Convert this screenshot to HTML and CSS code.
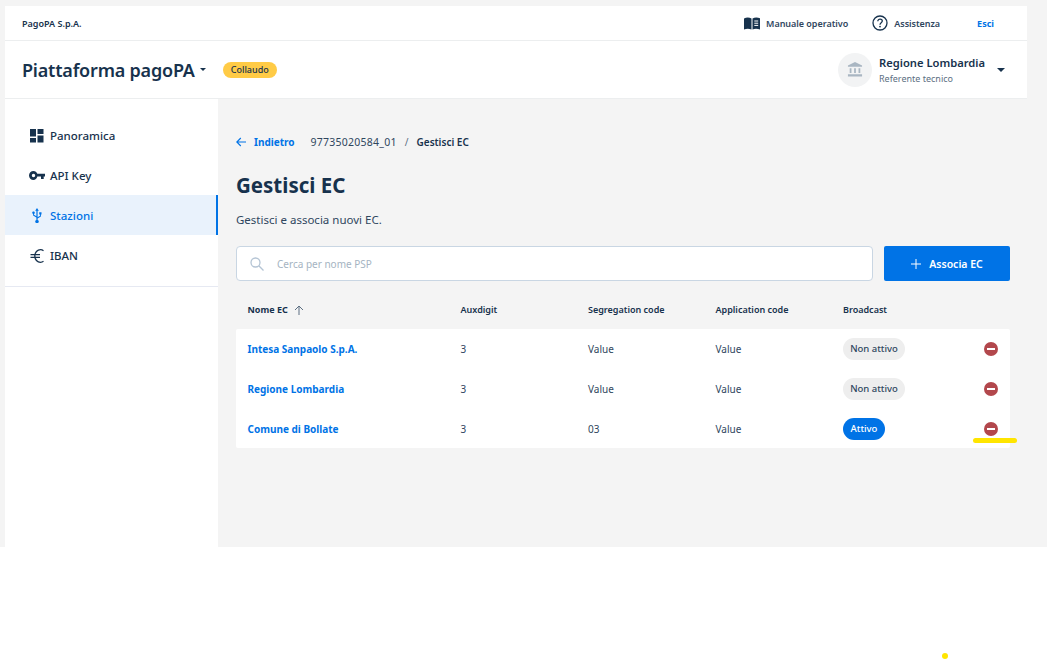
FILE: index.html
```html
<!DOCTYPE html>
<html>
	<head>
		<meta charset="UTF-8">
		<title>Gestisci EC</title>
		<link rel="stylesheet" href="styles.css">
	</head>
	<body>
		<section class="frame">
			<div class="topbar">
				<span class="company">PagoPA S.p.A.</span>
				<div class="toplinks">
					<span class="toplink">
						<svg width="16" height="13" viewBox="0 0 16 13"><path fill="#17324d" d="M0 1.5C2.500.2 5 .2 7.500 1.500V12.600C5 11.400 2.500 11.400 0 12.600Z"/><path fill="#17324d" d="M8.500 1.500C10.500.3 13.500.2 16 1.300V12.600C13.500 11.400 10.500 11.400 8.500 12.600Z"/><path stroke="#fff" d="M10.300 4H14.200M10.300 6.200H14.200M10.300 8.400H14.200"/></svg>
						Manuale operativo
					</span>
					<span class="toplink help">
						<svg width="16" height="16" viewBox="0 0 16 16"><circle cx="8" cy="8" r="7" fill="none" stroke="#17324d" stroke-width="1.300"/><path fill="none" stroke="#17324d" stroke-width="1.300" d="M5.800 6.200C5.800 3.400 10.300 3.500 10.300 6.100C10.300 7.800 8 7.800 8 9.700"/><circle cx="8" cy="11.600" r=".9" fill="#17324d"/></svg>
						Assistenza
					</span>
					<a class="logout">Esci</a>
				</div>
			</div>
			<header class="header">
				<div class="product">
					<h2>Piattaforma pagoPA</h2>
					<i class="caret small"></i>
					<span class="env">Collaudo</span>
				</div>
				<div class="party">
					<div class="avatar">
						<svg width="16" height="15" viewBox="0 0 18 17"><path fill="#a9b6c2" d="M9 0L17 4V5.500H1V4ZM3 7H5V12.500H3ZM8 7H10V12.500H8ZM13 7H15V12.500H13ZM1 14H17V16.500H1Z"/></svg>
					</div>
					<div class="partyname">
						<b>Regione Lombardia</b>
						<span>Referente tecnico</span>
					</div>
					<i class="caret"></i>
				</div>
			</header>
			<div class="body">
				<nav class="sidebar">
					<ul class="menu">
						<li>
							<svg width="14" height="14" viewBox="0 0 14 14"><path fill="#17324d" d="M0 0H6V7.500H0ZM7.500 0H13.500V5H7.500ZM7.500 6.500H13.500V13.500H7.500ZM0 9H6V13.500H0Z"/></svg>
							Panoramica
						</li>
						<li>
							<svg width="16" height="9" viewBox="0 0 16 9"><path fill="#17324d" fill-rule="evenodd" d="M4.500 0C6.300 0 7.800 1.100 8.300 2.800H16V5.500H14.700V8H12V5.500H8.300C7.800 7.600 6.300 9 4.500 9C2 9 0 7 0 4.500C0 2 2 0 4.500 0ZM4.500 2.800A1.700 1.700 0 1 0 4.500 6.200A1.700 1.700 0 1 0 4.500 2.800Z"/></svg>
							API Key
						</li>
						<li class="on">
							<svg width="10" height="15" viewBox="0 0 10 15"><path fill="#0073e6" d="M5 0L6.800 2.800H5.600V9.300L8 7.800V6.500H7.200V4.200H9.500V6.500H8.900V8.400L5.600 10.500V12C6.300 12.200 6.800 12.800 6.800 13.400C6.800 14.300 6 15 5 15C4 15 3.200 14.300 3.200 13.400C3.200 12.800 3.700 12.200 4.400 12V9.500L1.100 7.400V5.900C.6 5.700.2 5.200.2 4.700C.2 4 .8 3.500 1.500 3.500C2.200 3.500 2.800 4 2.800 4.700C2.800 5.200 2.500 5.700 2 5.900V6.800L4.400 8.300V2.800H3.200Z"/></svg>
							Stazioni
						</li>
						<li>
							<svg width="14" height="14" viewBox="0 0 14 14"><path fill="none" stroke="#17324d" stroke-width="1.300" d="M13.500 1.700C12.700 1.100 11.700.7 10.500.7C7.300.7 4.800 3.500 4.800 7C4.800 10.500 7.300 13.300 10.500 13.300C11.700 13.300 12.700 12.900 13.500 12.300M.5 5.600H10M.5 8.400H10"/></svg>
							IBAN
						</li>
					</ul>
				</nav>
				<main class="content">
					<div class="crumbs">
						<a class="back">
							<svg width="10" height="10" viewBox="0 0 10 10"><path fill="none" stroke="#0073e6" stroke-width="1.100" d="M10 5H1M4.800 1L.8 5L4.800 9"/></svg>
							Indietro
						</a>
						<span class="code">97735020584_01</span>
						<span class="sep">/</span>
						<span class="current">Gestisci EC</span>
					</div>
					<h1>Gestisci EC</h1>
					<p class="intro">Gestisci e associa nuovi EC.</p>
					<div class="tools">
						<div class="search">
							<svg width="14" height="14" viewBox="0 0 14 14"><circle cx="5.500" cy="5.500" r="4.500" fill="none" stroke="#b4c4d4" stroke-width="1.300"/><path stroke="#b4c4d4" stroke-width="1.300" d="M8.800 8.800L13.500 13.500"/></svg>
							<span>Cerca per nome PSP</span>
						</div>
						<button class="add">
							<svg width="10" height="10" viewBox="0 0 10 10"><path stroke="#fff" d="M5 0V10M0 5H10"/></svg>
							Associa EC
						</button>
					</div>
					<div class="table">
						<div class="row head">
							<span class="name">Nome EC
								<svg width="10" height="10" viewBox="0 0 10 10"><path fill="none" stroke="#5c6f82" d="M5 10V1M1 5L5 1L9 5"/></svg>
							</span>
							<span>Auxdigit</span>
							<span>Segregation code</span>
							<span>Application code</span>
							<span>Broadcast</span>
						</div>
						<div class="rows">
							<div class="row">
								<a class="name">Intesa Sanpaolo S.p.A.</a>
								<span>3</span>
								<span>Value</span>
								<span>Value</span>
								<span><em class="chip">Non attivo</em></span>
								<i class="remove"></i>
							</div>
							<div class="row">
								<a class="name">Regione Lombardia</a>
								<span>3</span>
								<span>Value</span>
								<span>Value</span>
								<span><em class="chip">Non attivo</em></span>
								<i class="remove"></i>
							</div>
							<div class="row">
								<a class="name">Comune di Bollate</a>
								<span>3</span>
								<span>03</span>
								<span>Value</span>
								<span><em class="chip active">Attivo</em></span>
								<i class="remove"></i>
							</div>
						</div>
					</div>
				</main>
			</div>
			<div class="mark"></div>
		</section>
		<div class="dot"></div>
	</body>
</html>
```

FILE: styles.css
```css
*{
	margin: 0;
	padding: 0;
	box-sizing: border-box;
}
body{
	background-color: #fff;
	color: #17324d;
	font-family: "Noto Sans", sans-serif;
	height: 659px;
	overflow: hidden;
	position: relative;
}
.frame{
	height: 547px;
	background-color: #f4f4f4;
	padding: 6px 20px 0 5px;
	display: flex;
	flex-direction: column;
}
.topbar{
	height: 35px;
	background-color: #fff;
	border-bottom: 1px solid #eceeef;
	padding: 0 33px 0 17px;
	display: flex;
	align-items: center;
	justify-content: space-between;
	font-size: 9px;
	font-weight: 600;
}
.toplinks{
	display: flex;
	align-items: center;
}
.toplink{
	display: flex;
	align-items: center;
	gap: 6px;
	margin-right: 24px;
	color: #2f465e;
	letter-spacing: -.03px;
}
.toplink.help{
	margin-right: 37px;
}
.logout{
	color: #0073e6;
	font-weight: 700;
}
.header{
	height: 58px;
	background-color: #fff;
	border-bottom: 1px solid #eceeef;
	padding: 0 22px 0 17px;
	display: flex;
	align-items: center;
	justify-content: space-between;
}
.product{
	display: flex;
	align-items: center;
}
.product h2{
	font-size: 18px;
	font-weight: 600;
	letter-spacing: -.2px;
}
.caret{
	width: 0;
	height: 0;
	border-left: 4px solid transparent;
	border-right: 4px solid transparent;
	border-top: 4px solid #17324d;
}
.caret.small{
	margin-left: 5px;
	border-width: 3px 3.500px 0;
	border-top-color: #17324d;
	border-left-color: transparent;
	border-right-color: transparent;
}
.env{
	margin-left: 17px;
	height: 16px;
	width: 54px;
	border-radius: 8px;
	background-color: #ffcb46;
	font-size: 9px;
	font-weight: 500;
	line-height: 16px;
	text-align: center;
}
.party{
	display: flex;
	align-items: center;
}
.avatar{
	width: 34px;
	height: 34px;
	border-radius: 50%;
	background-color: #f2f3f4;
	display: flex;
	align-items: center;
	justify-content: center;
}
.partyname{
	margin-left: 7px;
	width: 118px;
	display: flex;
	flex-direction: column;
}
.partyname b{
	font-size: 11.200px;
	font-weight: 600;
	line-height: 17px;
}
.partyname span{
	font-size: 9px;
	color: #5c6f82;
	line-height: 15px;
}
.body{
	flex: 1;
	display: flex;
}
.sidebar{
	width: 213px;
	background-color: #fff;
}
.menu{
	list-style: none;
	padding-top: 16px;
	border-bottom: 1px solid #e6e9f2;
	height: 188px;
}
.menu li{
	height: 40px;
	padding: 1px 0 0 24px;
	display: flex;
	align-items: center;
	gap: 5px;
	font-size: 11.500px;
	font-weight: 500;
}
.menu li svg{
	width: 16px;
	flex: none;
}
.menu li.on{
	background-color: #e9f2fc;
	border-right: 2px solid #0073e6;
	color: #0073e6;
}
.content{
	flex: 1;
	padding: 36px 17px 0 18px;
}
.crumbs{
	display: flex;
	align-items: center;
	height: 14px;
	font-size: 10px;
}
.back{
	display: flex;
	align-items: center;
	gap: 8px;
	color: #0073e6;
	font-weight: 700;
	margin-right: 16px;
}
.code{
	color: #2f465e;
	font-size: 10.500px;
	letter-spacing: .25px;
}
.sep{
	margin: 0 8px;
	color: #5c6f82;
}
.current{
	font-weight: 600;
}
h1{
	margin-top: 21px;
	font-size: 20.500px;
	font-weight: 700;
	line-height: 30px;
}
.intro{
	margin-top: 12px;
	font-size: 11.500px;
	line-height: 16px;
	color: #2f465e;
}
.tools{
	margin-top: 18px;
	display: flex;
	gap: 11px;
}
.search{
	flex: 1;
	height: 35px;
	background-color: #fff;
	border: 1px solid #c9d6e3;
	border-radius: 4px;
	padding-left: 13px;
	display: flex;
	align-items: center;
	gap: 13px;
	font-size: 10px;
	color: #a5b4c2;
}
.add{
	width: 126px;
	height: 35px;
	border: none;
	border-radius: 2px;
	background-color: #0073e6;
	color: #fff;
	font-family: inherit;
	font-size: 10.500px;
	font-weight: 600;
	display: flex;
	align-items: center;
	justify-content: center;
	gap: 8px;
}
.table{
	margin-top: 11px;
}
.row{
	display: grid;
	grid-template-columns: 213px 127.500px 127.500px 127.500px 1fr 38px;
	align-items: center;
	padding-left: 11.500px;
	height: 40px;
	font-size: 10px;
	color: #2f465e;
}
.row:last-child{
	height: 39px;
}
.row.head{
	height: 37px;
	padding-bottom: 2px;
	font-size: 9px;
	font-weight: 600;
	color: #17324d;
}
.head .name{
	display: flex;
	align-items: center;
	gap: 6px;
}
.rows{
	background-color: #fff;
	border-radius: 2px;
}
.name{
	font-weight: 700;
}
a.name{
	color: #0073e6;
}
.chip{
	display: inline-block;
	height: 22px;
	width: 62px;
	border-radius: 11px;
	background-color: #eeeeee;
	color: #2f465e;
	font-size: 9.500px;
	font-style: normal;
	font-weight: 500;
	line-height: 22px;
	text-align: center;
}
.chip.active{
	width: 42px;
	background-color: #0073e6;
	color: #fff;
}
.remove{
	width: 14px;
	height: 14px;
	border-radius: 50%;
	background-color: #b2474c;
	display: flex;
	align-items: center;
	justify-content: center;
	justify-self: end;
	margin-right: 12px;
}
.remove::after{
	content: "";
	width: 8px;
	height: 2px;
	background-color: #fff;
}
.mark{
	position: absolute;
	left: 973px;
	top: 438px;
	width: 44px;
	height: 5px;
	border-radius: 3px;
	background-color: #ffe500;
}
.dot{
	position: absolute;
	left: 942px;
	top: 653px;
	width: 6px;
	height: 6px;
	border-radius: 50%;
	background-color: #ffe500;
}
```
